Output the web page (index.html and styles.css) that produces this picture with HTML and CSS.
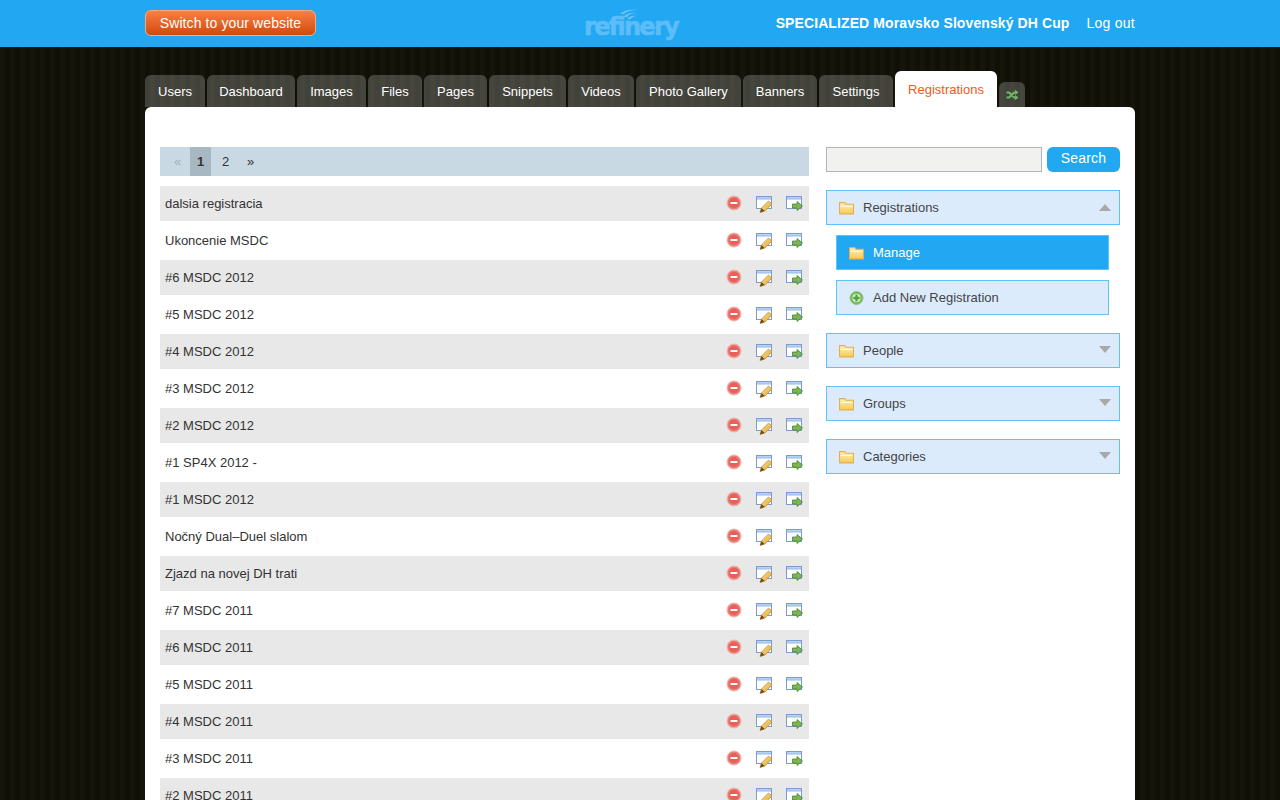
FILE: index.html

```html
<!DOCTYPE html>
<html lang="en">
<head>
    <meta charset="UTF-8">
    <title>Refinery - Registrations</title>
    <link rel="stylesheet" href="styles.css">
</head>
<body>
    <svg class="sprites" width="0" height="0">
        <defs>
            <linearGradient id="folderFill" x1="0" y1="0" x2="0" y2="1">
                <stop offset="0" stop-color="#fff0b8"/>
                <stop offset="1" stop-color="#f6cb58"/>
            </linearGradient>
            <linearGradient id="pencilFill" x1="0" y1="0" x2="1" y2="1">
                <stop offset="0" stop-color="#fbe08a"/>
                <stop offset="1" stop-color="#e0a436"/>
            </linearGradient>
            <linearGradient id="titleFill" x1="0" y1="0" x2="0" y2="1">
                <stop offset="0" stop-color="#c4d9f5"/>
                <stop offset="1" stop-color="#93b8e8"/>
            </linearGradient>
            <symbol id="i-delete" viewBox="0 0 16 16">
                <circle cx="8" cy="8" r="7" fill="#ea7d76" stroke="#f0b8b3"/>
                <circle cx="8" cy="8" r="5" fill="#e75f58"/>
                <rect x="4.500" y="7" width="7" height="2" fill="#fff"/>
            </symbol>
            <symbol id="i-edit" viewBox="0 0 17 17">
                <rect x="0.500" y="0.500" width="15" height="12" fill="#fff" stroke="#7a9ccf"/>
                <rect x="1" y="1" width="14" height="2.500" fill="url(#titleFill)"/>
                <path d="M4 16.500l1.500-4.500 7-7 3.500 3-7 7z" fill="url(#pencilFill)" stroke="#b98a32" stroke-width="0.700"/>
                <path d="M4 16.500l1.500-4.500 3 3z" fill="#6b4a1c"/>
            </symbol>
            <symbol id="i-go" viewBox="0 0 17 17">
                <rect x="0.500" y="0.500" width="15" height="12" fill="#fff" stroke="#7a9ccf"/>
                <rect x="1" y="1" width="14" height="2.500" fill="url(#titleFill)"/>
                <path d="M6.500 8h4.500v-2.500l5.500 4.500-5.500 4.500v-2.500h-4.500z" fill="#7fb356" stroke="#3f8a2c" stroke-width="0.800"/>
            </symbol>
            <symbol id="i-folder" viewBox="0 0 14 12">
                <path d="M0.500 11.500v-10.500h5l1 1.500h7v9z" fill="url(#folderFill)" stroke="#e6ae50"/>
                <rect x="1.500" y="4" width="11" height="1" fill="#fffbe8"/>
            </symbol>
            <symbol id="i-add" viewBox="0 0 14 14">
                <circle cx="7" cy="7" r="6.500" fill="#76bb5e" stroke="#8fc47d"/>
                <circle cx="7" cy="7" r="4" fill="#e4f3dc"/>
                <path d="M5.800 3.800h2.400v2h2v2.400h-2v2h-2.400v-2h-2v-2.400h2z" fill="#53a23d"/>
            </symbol>
        </defs>
    </svg>

    <header class="topbar">
        <div class="wrap topbar-inner">
            <a class="switch-btn" href="#">Switch to your website</a>
            <div class="logo">
                <svg class="logo-wing" width="18" height="10" viewBox="0 0 18 10">
                    <path d="M0 5C4 1 10 0 18 1 12 1 7 2 4 5zM3 8c3-3 8-5 14-4-5 0-8 1-10 4zM7 10c2-2 5-4 10-3-3 0-5 1-6 3z" fill="#6cc4fa"/>
                </svg>
                <span class="logo-text">refinery</span>
            </div>
            <div class="site-info">
                <span class="site-name">SPECIALIZED Moravsko Slovenský DH Cup</span>
                <a class="logout" href="#">Log out</a>
            </div>
        </div>
    </header>

    <div class="wrap">
        <nav class="tabs">
            <a class="tab" href="#">Users</a>
            <a class="tab" href="#">Dashboard</a>
            <a class="tab" href="#">Images</a>
            <a class="tab" href="#">Files</a>
            <a class="tab" href="#">Pages</a>
            <a class="tab" href="#">Snippets</a>
            <a class="tab" href="#">Videos</a>
            <a class="tab" href="#">Photo Gallery</a>
            <a class="tab" href="#">Banners</a>
            <a class="tab" href="#">Settings</a>
            <a class="tab tab-active" href="#">Registrations</a>
            <a class="tab tab-icon" href="#">
                <svg width="15" height="12" viewBox="0 0 16 14">
                    <path d="M1 4h3l6 6h2M1 10h3l6-6h2" fill="none" stroke="#6fb865" stroke-width="2.400"/>
                    <path d="M11 1l4 3-4 3zM11 7l4 3-4 3z" fill="#6fb865"/>
                </svg>
            </a>
        </nav>

        <main class="content">
            <section class="records">
                <div class="pagination">
                    <span class="page page-off">«</span>
                    <span class="page page-current">1</span>
                    <a class="page" href="#">2</a>
                    <a class="page" href="#">»</a>
                </div>
                <ul class="rows">
                    <li class="row"><span class="row-title">dalsia registracia</span><span class="row-actions"><svg class="act-del"><use href="#i-delete"/></svg><svg><use href="#i-edit"/></svg><svg><use href="#i-go"/></svg></span></li>
                    <li class="row"><span class="row-title">Ukoncenie MSDC</span><span class="row-actions"><svg class="act-del"><use href="#i-delete"/></svg><svg><use href="#i-edit"/></svg><svg><use href="#i-go"/></svg></span></li>
                    <li class="row"><span class="row-title">#6 MSDC 2012</span><span class="row-actions"><svg class="act-del"><use href="#i-delete"/></svg><svg><use href="#i-edit"/></svg><svg><use href="#i-go"/></svg></span></li>
                    <li class="row"><span class="row-title">#5 MSDC 2012</span><span class="row-actions"><svg class="act-del"><use href="#i-delete"/></svg><svg><use href="#i-edit"/></svg><svg><use href="#i-go"/></svg></span></li>
                    <li class="row"><span class="row-title">#4 MSDC 2012</span><span class="row-actions"><svg class="act-del"><use href="#i-delete"/></svg><svg><use href="#i-edit"/></svg><svg><use href="#i-go"/></svg></span></li>
                    <li class="row"><span class="row-title">#3 MSDC 2012</span><span class="row-actions"><svg class="act-del"><use href="#i-delete"/></svg><svg><use href="#i-edit"/></svg><svg><use href="#i-go"/></svg></span></li>
                    <li class="row"><span class="row-title">#2 MSDC 2012</span><span class="row-actions"><svg class="act-del"><use href="#i-delete"/></svg><svg><use href="#i-edit"/></svg><svg><use href="#i-go"/></svg></span></li>
                    <li class="row"><span class="row-title">#1 SP4X 2012 -</span><span class="row-actions"><svg class="act-del"><use href="#i-delete"/></svg><svg><use href="#i-edit"/></svg><svg><use href="#i-go"/></svg></span></li>
                    <li class="row"><span class="row-title">#1 MSDC 2012</span><span class="row-actions"><svg class="act-del"><use href="#i-delete"/></svg><svg><use href="#i-edit"/></svg><svg><use href="#i-go"/></svg></span></li>
                    <li class="row"><span class="row-title">Nočný Dual–Duel slalom</span><span class="row-actions"><svg class="act-del"><use href="#i-delete"/></svg><svg><use href="#i-edit"/></svg><svg><use href="#i-go"/></svg></span></li>
                    <li class="row"><span class="row-title">Zjazd na novej DH trati</span><span class="row-actions"><svg class="act-del"><use href="#i-delete"/></svg><svg><use href="#i-edit"/></svg><svg><use href="#i-go"/></svg></span></li>
                    <li class="row"><span class="row-title">#7 MSDC 2011</span><span class="row-actions"><svg class="act-del"><use href="#i-delete"/></svg><svg><use href="#i-edit"/></svg><svg><use href="#i-go"/></svg></span></li>
                    <li class="row"><span class="row-title">#6 MSDC 2011</span><span class="row-actions"><svg class="act-del"><use href="#i-delete"/></svg><svg><use href="#i-edit"/></svg><svg><use href="#i-go"/></svg></span></li>
                    <li class="row"><span class="row-title">#5 MSDC 2011</span><span class="row-actions"><svg class="act-del"><use href="#i-delete"/></svg><svg><use href="#i-edit"/></svg><svg><use href="#i-go"/></svg></span></li>
                    <li class="row"><span class="row-title">#4 MSDC 2011</span><span class="row-actions"><svg class="act-del"><use href="#i-delete"/></svg><svg><use href="#i-edit"/></svg><svg><use href="#i-go"/></svg></span></li>
                    <li class="row"><span class="row-title">#3 MSDC 2011</span><span class="row-actions"><svg class="act-del"><use href="#i-delete"/></svg><svg><use href="#i-edit"/></svg><svg><use href="#i-go"/></svg></span></li>
                    <li class="row"><span class="row-title">#2 MSDC 2011</span><span class="row-actions"><svg class="act-del"><use href="#i-delete"/></svg><svg><use href="#i-edit"/></svg><svg><use href="#i-go"/></svg></span></li>
                </ul>
            </section>

            <aside class="sidebar">
                <form class="search">
                    <input class="search-input" type="text">
                    <button class="search-btn" type="button">Search</button>
                </form>

                <div class="menu-group">
                    <div class="menu-head">
                        <svg class="menu-icon"><use href="#i-folder"/></svg>
                        <span>Registrations</span>
                        <i class="arrow arrow-up"></i>
                    </div>
                    <a class="menu-item menu-item-on" href="#">
                        <svg class="menu-icon"><use href="#i-folder"/></svg>
                        <span>Manage</span>
                    </a>
                    <a class="menu-item" href="#">
                        <svg class="menu-icon"><use href="#i-add"/></svg>
                        <span>Add New Registration</span>
                    </a>
                </div>
                <div class="menu-group">
                    <div class="menu-head">
                        <svg class="menu-icon"><use href="#i-folder"/></svg>
                        <span>People</span>
                        <i class="arrow"></i>
                    </div>
                </div>
                <div class="menu-group">
                    <div class="menu-head">
                        <svg class="menu-icon"><use href="#i-folder"/></svg>
                        <span>Groups</span>
                        <i class="arrow"></i>
                    </div>
                </div>
                <div class="menu-group">
                    <div class="menu-head">
                        <svg class="menu-icon"><use href="#i-folder"/></svg>
                        <span>Categories</span>
                        <i class="arrow"></i>
                    </div>
                </div>
            </aside>
        </main>
    </div>
</body>
</html>
```

FILE: styles.css

```css
html, body {
    height: 100%;
}
body {
    margin: 0;
    overflow: hidden;
    font-family: "Liberation Sans", Arial, sans-serif;
    font-size: 13px;
    color: #333;
    background-color: #14140a;
    background-image: repeating-linear-gradient(90deg, #15150a 0, #15150a 5px, #101008 5px, #101008 10px);
}
a {
    text-decoration: none;
    color: inherit;
}
.sprites {
    display: block;
    height: 0;
}
.wrap {
    width: 990px;
    margin: 0 auto;
}

/* top bar */
.topbar {
    height: 47px;
    background: #22a7f2;
}
.topbar-inner {
    display: flex;
    align-items: center;
    height: 47px;
    position: relative;
}
.switch-btn {
    display: block;
    box-sizing: border-box;
    width: 171px;
    height: 26px;
    margin-top: -1px;
    line-height: 24px;
    text-align: center;
    font-size: 14px;
    letter-spacing: 0.1px;
    color: #fff;
    border: 1px solid #f9a77d;
    border-radius: 6px;
    background: linear-gradient(#fb7f45, #cf4a0c);
}
.logo {
    position: absolute;
    left: 439px;
    top: 9px;
    width: 100px;
    height: 32px;
}
.logo-wing {
    position: absolute;
    left: 36px;
    top: 0;
}
.logo-text {
    position: absolute;
    left: 0;
    top: 4px;
    font-family: "DejaVu Sans", sans-serif;
    font-weight: bold;
    font-size: 24px;
    letter-spacing: -1.700px;
    color: #5cbdf9;
    -webkit-text-stroke: 0.6px #5cbdf9;
}
.site-info {
    margin-left: auto;
    margin-top: -2px;
    display: flex;
    gap: 17px;
    font-size: 14px;
    color: #fff;
}
.site-name {
    font-weight: bold;
    letter-spacing: 0.1px;
}
.logout {
    letter-spacing: 0.25px;
}

/* tabs */
.tabs {
    display: flex;
    align-items: flex-end;
    gap: 2px;
    height: 36px;
    margin-top: 24px;
}
.tab {
    display: block;
    height: 32px;
    line-height: 33px;
    text-align: center;
    color: #fff;
    border-radius: 6px 6px 0 0;
    background: rgba(255, 255, 255, 0.21);
}
.tab:nth-child(1) { width: 60px; }
.tab:nth-child(2) { width: 88px; }
.tab:nth-child(3) { width: 69px; }
.tab:nth-child(4) { width: 54px; }
.tab:nth-child(5) { width: 63px; }
.tab:nth-child(6) { width: 77px; }
.tab:nth-child(7) { width: 66px; }
.tab:nth-child(8) { width: 105px; }
.tab:nth-child(9) { width: 74px; }
.tab:nth-child(10) { width: 74px; }
.tab:nth-child(11) { width: 102px; }
.tab-active {
    height: 36px;
    line-height: 37px;
    color: #f2591a;
    background: #fff;
}
.tab-icon {
    display: flex;
    align-items: center;
    justify-content: center;
    width: 26px;
    height: 25px;
}

/* main panel */
.content {
    display: flex;
    justify-content: space-between;
    padding: 40px 15px 0;
    height: 800px;
    background: #fff;
    border-radius: 6px 6px 0 0;
}
.records {
    width: 649px;
}
.pagination {
    display: flex;
    height: 29px;
    line-height: 29px;
    padding-left: 5px;
    background: #c9d9e3;
    margin-bottom: 10px;
}
.page {
    width: 25px;
    text-align: center;
}
.page-off {
    color: #9fb0ba;
}
.page-current {
    width: 21px;
    margin-right: 2px;
    font-weight: bold;
    background: #a8b8c2;
}
.rows {
    list-style: none;
    margin: 0;
    padding: 0;
}
.row {
    display: flex;
    align-items: center;
    justify-content: space-between;
    height: 35px;
    margin-bottom: 2px;
    padding: 0 6px 0 5px;
}
.row:nth-child(odd) {
    background: #e8e8e8;
}
.row-actions {
    display: flex;
    gap: 13px;
    margin-top: 1px;
}
.row-actions svg {
    width: 17px;
    height: 17px;
}
.row-actions .act-del {
    width: 16px;
    height: 16px;
    margin-top: -1px;
    margin-right: 1px;
}

/* sidebar */
.sidebar {
    width: 294px;
}
.search {
    display: flex;
    gap: 5px;
    margin: 0 0 18px;
}
.search-input {
    box-sizing: border-box;
    width: 216px;
    height: 25px;
    margin: 0;
    border: 1px solid #b4b4b4;
    background: #f1f1ef;
}
.search-btn {
    width: 73px;
    height: 25px;
    padding: 0 0 3px;
    border: none;
    border-radius: 6px;
    font-family: inherit;
    font-size: 14px;
    letter-spacing: 0.2px;
    color: #fff;
    background: #22a7f2;
}
.menu-group {
    margin-bottom: 18px;
}
.menu-head, .menu-item {
    display: flex;
    align-items: center;
    box-sizing: border-box;
    height: 35px;
    padding-left: 12px;
    gap: 9px;
    color: #444;
    border: 1px solid #5fc2fb;
    background: #dcebfc;
}
.menu-item {
    width: 273px;
    margin: 10px 0 0 10px;
}
.menu-item-on {
    color: #fff;
    background: #22a7f2;
}
.menu-icon {
    width: 15px;
    height: 14px;
}
.arrow {
    margin-left: auto;
    margin-right: 8px;
    margin-top: -2px;
    border-left: 6.5px solid transparent;
    border-right: 6.5px solid transparent;
    border-top: 7px solid #a9a9a9;
}
.arrow-up {
    margin-top: 0;
    border-top: none;
    border-bottom: 7px solid #a9a9a9;
}
```
